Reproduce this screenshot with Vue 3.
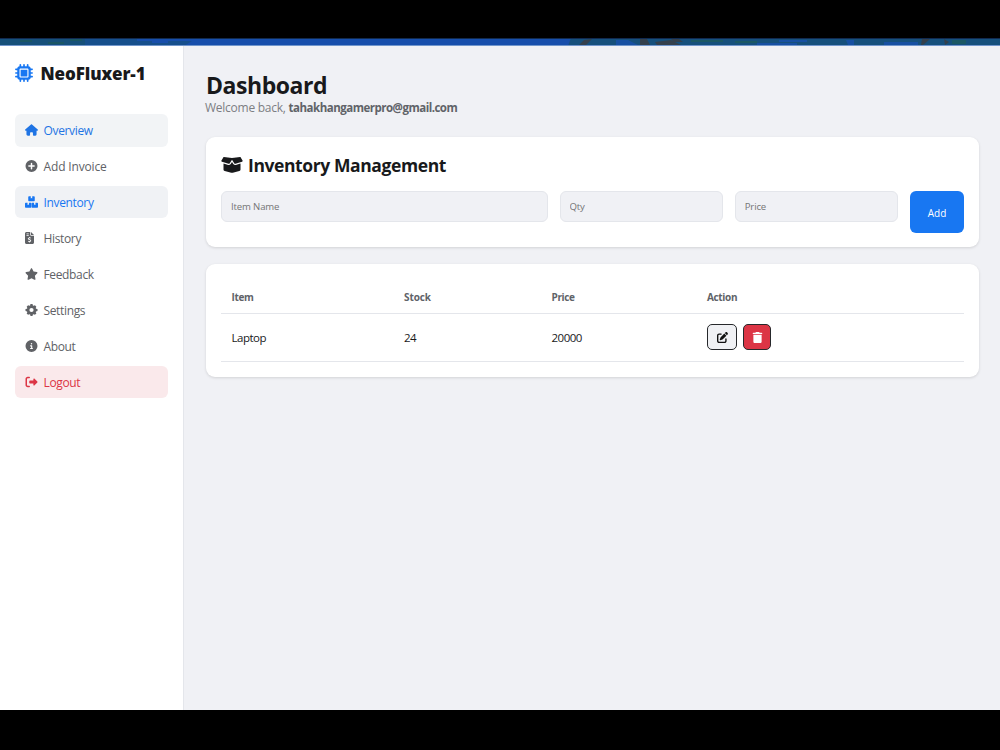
<template>
  <div class="screen">
    <div class="wallpaper">
      <svg viewBox="0 0 1000 8" preserveAspectRatio="none">
        <rect width="1000" height="8" fill="#174eab" />
        <rect width="136" height="8" fill="#16507a" />
        <rect x="85" width="52" height="8" fill="#164f8c" />
        <path d="M137 3h15v2h16v-2h24l-8 5h-47z" fill="#164f8c" />
        <path d="M20 2h12v2h-12zM48 4h16v2H48zM70 1h12v2H70z" fill="#1a5664" />
        <path d="M571 0H1000V8H568z" fill="#16507c" />
        <path d="M584 2l8-1-6 6h-7zM640 1h7l3 6h-10zM655 4l16-2 10 5h-24zM671 1h8l4 3h-9zM922 1h8l-7 6h-2zM944 1l5 3-4 3z" fill="#34404c" />
        <path d="M616 2h12l10 5h-22zM757 5h40v2h-40zM779 2h28v2h-28zM846 2h8v5h-6zM884 4h34v3h-34z" fill="#1750a2" />
        <path d="M691 2h32v2h-32zM735 3h22v2h-22zM952 2h14v4h-14z" fill="#1b5864" />
        <rect width="1000" height="1" fill="#102a50" />
        <rect y="7" width="1000" height="1" fill="#7196cc" />
      </svg>
    </div>

    <div class="app">
      <aside class="sidebar">
        <div class="brand">
          <svg class="brand-icon" viewBox="0 0 512 512">
            <path :d="icons.chip" fill="currentColor" />
          </svg>
          <span>NeoFluxer-1</span>
        </div>
        <nav class="menu">
          <a
            v-for="item in menu"
            :key="item.label"
            class="menu-item"
            :class="[item.state, { active: item.label === current }]"
            @click="current = item.label"
          >
            <svg class="menu-icon" :class="item.icon" :viewBox="item.box || '0 0 512 512'">
              <path :d="icons[item.icon]" fill="currentColor" fill-rule="evenodd" />
            </svg>
            <span>{{ item.label }}</span>
          </a>
        </nav>
      </aside>

      <main class="content">
        <h1>Dashboard</h1>
        <p class="welcome">Welcome back, <strong>tahakhangamerpro@gmail.com</strong></p>

        <section class="card form-card">
          <h2>
            <svg class="box-icon" viewBox="0 0 640 512">
              <path :d="icons.box" fill="currentColor" />
            </svg>
            <span>Inventory Management</span>
          </h2>
          <form class="item-form" @submit.prevent="addItem">
            <input v-model="form.name" placeholder="Item Name" />
            <input v-model="form.qty" placeholder="Qty" />
            <input v-model="form.price" placeholder="Price" />
            <button class="btn-add">Add</button>
          </form>
        </section>

        <section class="card table-card">
          <table>
            <colgroup>
              <col class="col-item" />
              <col class="col-stock" />
              <col class="col-price" />
              <col />
            </colgroup>
            <thead>
              <tr>
                <th>Item</th>
                <th>Stock</th>
                <th>Price</th>
                <th>Action</th>
              </tr>
            </thead>
            <tbody>
              <tr v-for="(row, index) in items" :key="index">
                <td>{{ row.name }}</td>
                <td>{{ row.qty }}</td>
                <td>{{ row.price }}</td>
                <td>
                  <div class="actions">
                    <button class="btn-icon" title="Edit" @click="editItem(index)">
                      <svg viewBox="0 0 512 512"><path :d="icons.edit" fill="currentColor" /></svg>
                    </button>
                    <button class="btn-icon btn-danger" title="Delete" @click="items.splice(index, 1)">
                      <svg viewBox="0 0 448 512"><path :d="icons.trash" fill="currentColor" /></svg>
                    </button>
                  </div>
                </td>
              </tr>
            </tbody>
          </table>
        </section>
      </main>
    </div>
  </div>
</template>

<script setup>
import { ref, reactive } from 'vue'

const icons = {
  chip: 'M176 24c0-13-11-24-24-24s-24 11-24 24v40c-35 0-64 29-64 64H24c-13 0-24 11-24 24s11 24 24 24h40v56H24c-13 0-24 11-24 24s11 24 24 24h40v56H24c-13 0-24 11-24 24s11 24 24 24h40c0 35 29 64 64 64v40c0 13 11 24 24 24s24-11 24-24v-40h56v40c0 13 11 24 24 24s24-11 24-24v-40h56v40c0 13 11 24 24 24s24-11 24-24v-40c35 0 64-29 64-64h40c13 0 24-11 24-24s-11-24-24-24h-40v-56h40c13 0 24-11 24-24s-11-24-24-24h-40v-56h40c13 0 24-11 24-24s-11-24-24-24h-40c0-35-29-64-64-64V24c0-13-11-24-24-24s-24 11-24 24v40h-56V24c0-13-11-24-24-24s-24 11-24 24v40h-56V24zM160 128h192c18 0 32 14 32 32v192c0 18-14 32-32 32H160c-18 0-32-14-32-32V160c0-18 14-32 32-32zm192 32H160v192h192V160z',
  home: 'M576 256c0 18-15 32-32 32h-32l1 160c0 35-22 64-56 64h-73c-18 0-32-14-32-32v-96c0-18-14-32-32-32h-64c-18 0-32 14-32 32v96c0 18-14 32-32 32h-64c-36 0-64-28-64-64V288H32c-18 0-32-14-32-32 0-9 3-17 10-24L266 8c7-7 15-8 22-8s15 2 21 7l255 225c8 7 12 15 12 24z',
  plus: 'M256 512a256 256 0 1 0 0-512 256 256 0 1 0 0 512zM224 368v-80h-80c-18 0-32-14-32-32s14-32 32-32h80v-80c0-18 14-32 32-32s32 14 32 32v80h80c18 0 32 14 32 32s-14 32-32 32h-80v80c0 18-14 32-32 32s-32-14-32-32z',
  boxes: 'M176 0h80v96l32-20 32 20V0h80c18 0 32 14 32 32v160c0 18-14 32-32 32H176c-18 0-32-14-32-32V32c0-18 14-32 32-32zM32 288h80v96l32-20 32 20v-96h80c18 0 32 14 32 32v160c0 18-14 32-32 32H32c-18 0-32-14-32-32V320c0-18 14-32 32-32zm288 0h80v96l32-20 32 20v-96h80c18 0 32 14 32 32v160c0 18-14 32-32 32H320c-9 0-16-7-16-16V304c0-9 7-16 16-16z',
  invoice: 'M64 0C29 0 0 29 0 64v384c0 35 29 64 64 64h256c35 0 64-29 64-64V160H256c-18 0-32-14-32-32V0H64zM256 0v128h128L256 0zM64 64h96v32H64V64zm0 64h96v32H64v-32zm112 80h32v28c16 2 28 6 42 10l-9 31c-25-8-64-18-77-3-17 28 91 27 97 84 3 34-22 56-53 62v28h-32v-29c-20-4-35-10-52-17l12-31c25 11 66 26 85 9 25-34-94-29-99-87-3-30 21-51 54-57v-28z',
  star: 'M288 0c12 0 23 7 29 18l64 132 144 21c12 2 22 10 26 22s1 25-8 33L439 329l25 146c2 12-3 24-13 31s-23 8-34 2l-129-69-128 69c-11 6-24 5-34-2s-15-19-13-31l25-146L33 226c-9-8-12-21-8-33s14-20 26-22l144-21 64-132c6-11 17-18 29-18z',
  gear: 'M212 0h88l15 61 31 14 57-25 61 63-29 54 14 31 63 16v84l-62 17-14 33 29 54-62 60-55-29-33 14-17 65h-84l-17-65-31-14-57 29-60-61 29-54-14-32-64-16v-85l64-16 14-32-29-54 62-61 55 25 31-14zM256 346a90 90 0 1 0 0-180 90 90 0 1 0 0 180z',
  info: 'M256 512a256 256 0 1 0 0-512 256 256 0 1 0 0 512zM216 336h24v-64h-24c-13 0-24-11-24-24s11-24 24-24h48c13 0 24 11 24 24v88h8c13 0 24 11 24 24s-11 24-24 24h-80c-13 0-24-11-24-24s11-24 24-24zm40-208a32 32 0 1 1 0 64 32 32 0 1 1 0-64z',
  logout: 'M505 273c9-9 9-25 0-34L377 111c-15-15-41-4-41 17v64H192c-18 0-32 14-32 32v64c0 18 14 32 32 32h144v64c0 21 26 32 41 17l128-128zM160 96c18 0 32-14 32-32s-14-32-32-32H96C43 32 0 75 0 128v256c0 53 43 96 96 96h64c18 0 32-14 32-32s-14-32-32-32H96c-18 0-32-14-32-32V128c0-18 14-32 32-32h64z',
  box: 'M58 13c2-8 10-13 18-12l244 31L564 1c8-1 16 4 18 12l56 96c7 15-1 32-16 36l-198 57c-14 4-29-2-37-15l-67-107-67 107c-8 13-23 19-37 15L18 145c-15-4-23-21-16-36L58 13zM320 150l39 61c16 25 47 37 75 29l142-41v179c0 22-15 41-36 47l-197 49c-15 4-31 4-46 0l-197-49c-21-6-36-25-36-47V199l142 41c28 8 59-4 75-29l39-61z',
  edit: 'M471.6 21.7c-21.9-21.9-57.3-21.9-79.2 0L362.3 51.7l97.9 97.9 30.1-30.1c21.9-21.9 21.9-57.3 0-79.2L471.6 21.7zm-299.2 220c-6.1 6.1-10.8 13.6-13.5 21.9l-29.6 88.8c-2.9 8.6-.6 18.1 5.8 24.6s15.9 8.7 24.6 5.8l88.8-29.6c8.2-2.7 15.7-7.4 21.9-13.5L437.7 172.3 339.7 74.3 172.4 241.7zM96 64C43 64 0 107 0 160V416c0 53 43 96 96 96H352c53 0 96-43 96-96V320c0-17.7-14.3-32-32-32s-32 14.3-32 32v96c0 17.7-14.3 32-32 32H96c-17.7 0-32-14.3-32-32V160c0-17.7 14.3-32 32-32h96c17.7 0 32-14.3 32-32s-14.3-32-32-32H96z',
  trash: 'M135 18c6-11 17-18 29-18h120c12 0 23 7 29 18l7 14h96c18 0 32 14 32 32s-14 32-32 32H32C14 96 0 82 0 64s14-32 32-32h96l7-14zM32 128h384v320c0 35-29 64-64 64H96c-35 0-64-29-64-64V128z'
}

const menu = [
  { label: 'Overview', icon: 'home', box: '0 0 576 512', state: 'hovered' },
  { label: 'Add Invoice', icon: 'plus' },
  { label: 'Inventory', icon: 'boxes', box: '0 0 576 512' },
  { label: 'History', icon: 'invoice', box: '0 0 384 512' },
  { label: 'Feedback', icon: 'star', box: '0 0 576 512' },
  { label: 'Settings', icon: 'gear' },
  { label: 'About', icon: 'info' },
  { label: 'Logout', icon: 'logout', state: 'logout-link' }
]

const current = ref('Inventory')
const form = reactive({ name: '', qty: '', price: '' })
const items = ref([{ name: 'Laptop', qty: 24, price: 20000 }])

const addItem = () => {
  if (!form.name) return
  items.value.push({ ...form })
  form.name = ''
  form.qty = ''
  form.price = ''
}

const editItem = (index) => {
  Object.assign(form, items.value[index])
  items.value.splice(index, 1)
}
</script>

<style>
body {
  margin: 0;
  background: #000;
}
</style>

<style scoped>
* {
  box-sizing: border-box;
}

.screen {
  height: 750px;
  padding: 38px 0 40px;
  display: flex;
  flex-direction: column;
  background: #000;
  color: #18191b;
  font-family: "Open Sans", "Noto Sans", sans-serif;
  overflow: hidden;
}

.wallpaper {
  flex: 0 0 8px;
}

.wallpaper svg {
  display: block;
  width: 100%;
  height: 8px;
}

.app {
  flex: 1;
  display: flex;
  background: #f0f1f5;
}

/* Sidebar */
.sidebar {
  flex: 0 0 184px;
  padding: 14px 15px 0 14.5px;
  background: #fff;
  border-right: 1px solid #e4e6eb;
}

.brand {
  display: flex;
  align-items: center;
  height: 26px;
  gap: 8px;
  font-size: 17px;
  font-weight: 800;
  letter-spacing: -0.1px;
  white-space: nowrap;
}

.brand-icon {
  width: 18px;
  height: 18px;
  color: #1877f2;
}

.menu {
  display: flex;
  flex-direction: column;
  gap: 3.5px;
  margin-top: 28.3px;
}

.menu-item {
  display: flex;
  align-items: center;
  height: 32.4px;
  padding: 0 10px;
  gap: 6px;
  border-radius: 6px;
  font-size: 12px;
  letter-spacing: -0.35px;
  color: #606266;
  cursor: pointer;
}

.menu-item:nth-child(2) {
  letter-spacing: -0.15px;
}

.menu-item span {
  padding-top: 1px;
}

.menu-icon {
  width: 13px;
  height: 12px;
}

.menu-icon.invoice {
  width: 9px;
  margin-right: 4px;
}

.menu-item.hovered {
  background: #f2f4f6;
  color: #1f74e4;
}

.menu-item.active {
  background: #f0f2f5;
  color: #1877f2;
}

.menu-item.logout-link {
  background: #fae9eb;
  color: #dc3545;
}

/* Page */
.content {
  flex: 1;
  padding: 24px 21px 0 22px;
}

h1 {
  margin: 0;
  font-size: 23px;
  line-height: 30px;
  font-weight: 700;
  letter-spacing: -0.45px;
}

.welcome {
  margin: 0 0 21px -1px;
  font-size: 12px;
  line-height: 16px;
  letter-spacing: -0.25px;
  color: #7c7e83;
}

.welcome strong {
  font-size: 11.5px;
  letter-spacing: -0.5px;
  color: #606368;
}

.card {
  padding: 15px;
  background: #fff;
  border-radius: 9px;
  box-shadow: 0 1px 3px rgba(0, 0, 0, 0.13);
}

.form-card {
  height: 110px;
  margin-bottom: 17px;
}

.table-card {
  height: 113px;
}

h2 {
  display: flex;
  align-items: center;
  gap: 5px;
  height: 26px;
  margin: 0 0 13px;
  font-size: 17.5px;
  font-weight: 700;
  letter-spacing: -0.4px;
}

.box-icon {
  width: 22px;
  height: 17px;
}

.item-form {
  display: grid;
  grid-template-columns: 2fr 1fr 1fr 54px;
  gap: 12px;
  align-items: start;
}

.item-form input {
  width: 100%;
  min-width: 0;
  height: 31px;
  padding: 0 9px;
  border: 1px solid #e4e6eb;
  border-radius: 6px;
  background: #f0f1f5;
  font-family: inherit;
  font-size: 9.6px;
  letter-spacing: -0.15px;
  outline: none;
}

.item-form input::placeholder {
  color: #757575;
}

.btn-add {
  height: 42px;
  padding: 1px 0 0;
  border: none;
  border-radius: 6px;
  background: #1877f2;
  color: #fff;
  font-family: inherit;
  font-size: 10px;
}

/* Table */
table {
  width: 100%;
  table-layout: fixed;
  border-collapse: separate;
  border-spacing: 0;
}

.col-item {
  width: 172.5px;
}

.col-stock {
  width: 147.5px;
}

.col-price {
  width: 155.5px;
}

th,
td {
  padding: 0 10.5px;
  text-align: left;
  border-bottom: 1px solid #e4e6eb;
}

th {
  height: 35px;
  padding-top: 1px;
  font-size: 10px;
  font-weight: 700;
  letter-spacing: -0.35px;
  color: #606368;
}

th:nth-child(2) {
  letter-spacing: -0.1px;
}

td {
  height: 48px;
  font-size: 11.5px;
  letter-spacing: -0.5px;
}

.actions {
  display: flex;
  gap: 6px;
  margin-bottom: 1px;
}

.btn-icon {
  display: flex;
  align-items: center;
  justify-content: center;
  width: 30px;
  height: 26px;
  padding: 0;
  border: 1px solid #26282b;
  border-radius: 5px;
  background: #f0f1f4;
  color: #111;
}

.btn-icon svg {
  width: 11px;
  height: 11px;
}

.btn-icon.btn-danger {
  width: 28px;
  background: #dc3545;
  color: #fff;
}
</style>
